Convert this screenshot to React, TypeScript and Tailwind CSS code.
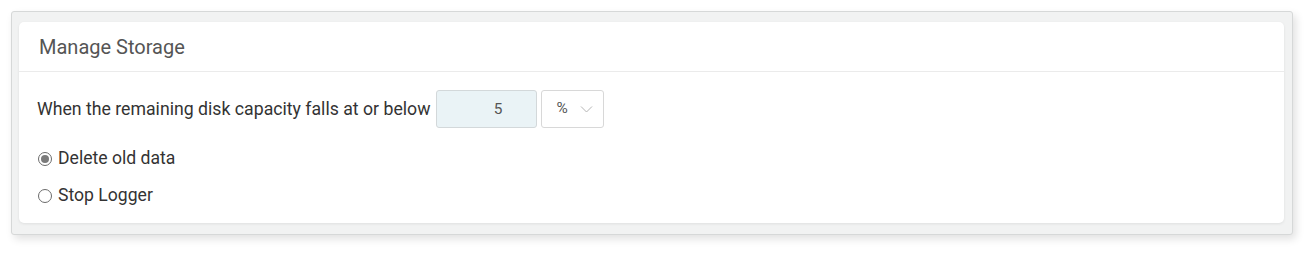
import { useState } from "react";

const Radio = ({ checked, label, onClick }: { checked: boolean; label: string; onClick: () => void }) => (
  <label className="flex items-center gap-[6px] cursor-pointer" onClick={onClick}>
    <span className="w-[14px] h-[14px] rounded-full border border-[#6b6b6b] bg-white flex items-center justify-center">
      {checked && <span className="w-[8px] h-[8px] rounded-full bg-[#7a7a7a]" />}
    </span>
    <span className="text-[17.6px] leading-[21px] text-[#333]">{label}</span>
  </label>
);

const App = () => {
  const [mode, setMode] = useState<"delete" | "stop">("delete");

  return (
    <div className="w-[1315px] h-[257px] bg-white pt-[11px] pl-[11px]" style={{ fontFamily: "Roboto, 'Liberation Sans', sans-serif" }}>
      <div className="w-[1282px] h-[224px] bg-[#f1f2f2] border border-[#d6d8d8] rounded-[3px] shadow-[3px_4px_8px_rgba(0,0,0,0.12)] pt-[10px] pl-[7px]">
        <div className="w-[1265px] h-[201px] bg-white rounded-[5px] shadow-[0_1px_3px_rgba(0,0,0,0.08)]">
          <div className="h-[50px] border-b border-[#ebebeb] flex items-center pl-[20px] pt-[1px]">
            <h2 className="text-[20px] text-[#555]">Manage Storage</h2>
          </div>
          <div className="pl-[18px] pt-[18px]">
            <div className="flex items-center gap-[5px]">
              <span className="text-[17.7px] text-[#333]">When the remaining disk capacity falls at or below</span>
              <input
                defaultValue="5"
                className="w-[101px] h-[38px] bg-[#eaf3f6] border border-[#d3d8da] rounded-[3px] text-[15.4px] text-[#555] text-center pl-[24px] outline-none"
              />
              <div className="w-[63px] h-[38px] border border-[#d8d8d8] rounded-[3px] flex items-center pl-[15px] pr-[10px] justify-between ml-[-1px]">
                <span className="text-[15.4px] text-[#555]">%</span>
                <svg width="13" height="8" viewBox="0 0 13 8" fill="none" stroke="#b5b5b5" strokeWidth="1">
                  <path d="M1 1.5l5.5 5.5 5.5-5.5" />
                </svg>
              </div>
            </div>
            <div className="flex flex-col gap-[16px] mt-[20px] pl-[1px]">
              <Radio checked={mode === "delete"} label="Delete old data" onClick={() => setMode("delete")} />
              <Radio checked={mode === "stop"} label="Stop Logger" onClick={() => setMode("stop")} />
            </div>
          </div>
        </div>
      </div>
    </div>
  );
};

export default App;
